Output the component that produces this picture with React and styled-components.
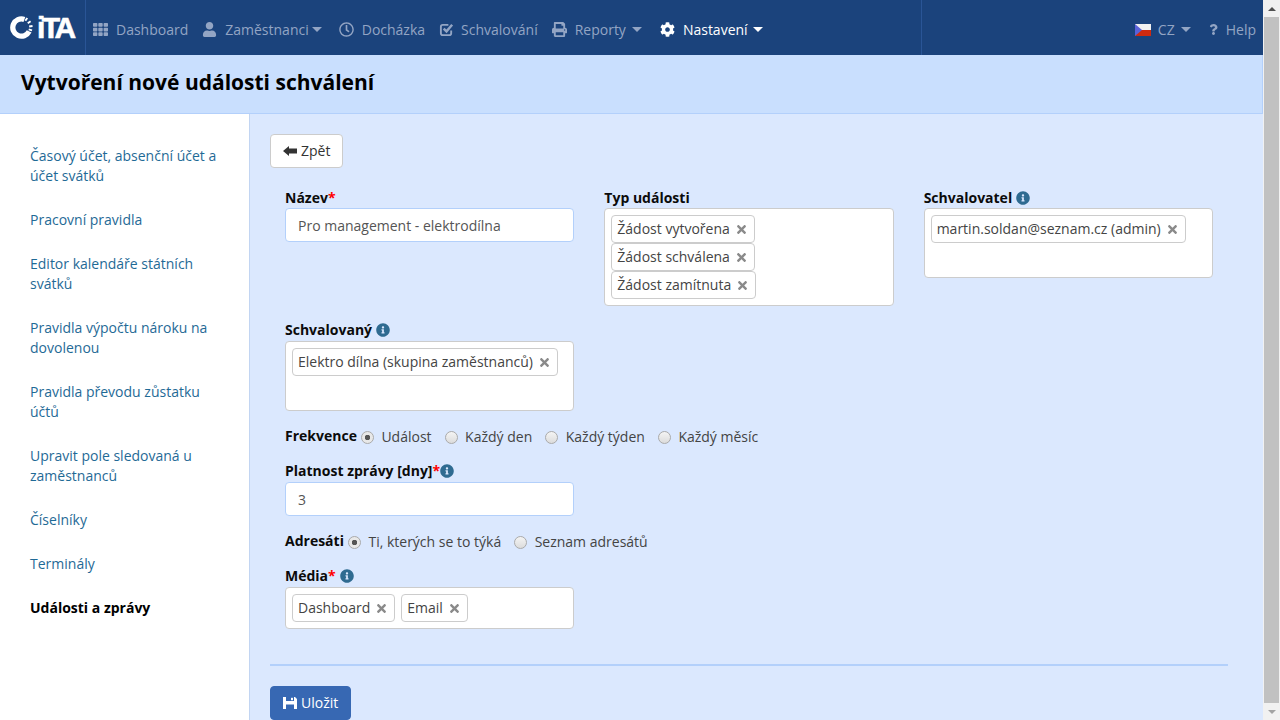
import styled, { createGlobalStyle } from 'styled-components'
import { FaTh, FaUser, FaRegClock, FaPrint, FaCog, FaQuestion, FaInfoCircle, FaTimes } from 'react-icons/fa'

const GlobalStyle = createGlobalStyle`
    html, body {
        margin: 0;
        height: 100%;
        overflow: hidden;
    }
    body {
        font-family: "Open Sans", sans-serif;
        font-size: 14px;
        line-height: 20px;
        color: #333;
    }
    * {
        box-sizing: border-box;
    }
`

const Frame = styled.div`
    display: flex;
    width: 1280px;
    height: 720px;
    overflow: hidden;
`

const Page = styled.div`
    flex: 1;
    min-width: 0;
    display: flex;
    flex-direction: column;
    background: #dbe8fe;
`

const Scrollbar = styled.div`
    width: 17px;
    background: #f1f1f1;
    display: flex;
    flex-direction: column;
    align-items: center;
`

const ScrollArrow = styled.div`
    height: 17px;
    flex: none;
    display: flex;
    align-items: center;
    justify-content: center;

    &::before {
        content: '';
        border-left: 4px solid transparent;
        border-right: 4px solid transparent;
        ${p => p.down ? 'border-top: 4px solid #a3a3a3;' : 'border-bottom: 4px solid #505050;'}
    }
`

const ScrollThumb = styled.div`
    flex: 1;
    width: 15px;
    background: #c1c1c1;
`

const Navbar = styled.nav`
    height: 55px;
    flex: none;
    display: flex;
    align-items: stretch;
    background: #1b437c;
    color: #93a5c4;
`

const Brand = styled.div`
    width: 86px;
    flex: none;
    border-right: 1px solid #2a5596;
    display: flex;
    align-items: center;
    padding-left: 10px;
    gap: 4px;
`

const BrandText = styled.span`
    font-family: "Liberation Sans", sans-serif;
    font-weight: 700;
    font-size: 30px;
    line-height: 24px;
    letter-spacing: -3.5px;
    color: #fff;
    -webkit-text-stroke: 0.6px #fff;
`

const NavLeft = styled.div`
    width: 836px;
    flex: none;
    display: flex;
    align-items: center;
    padding: 4px 0 0 7px;
    border-right: 1px solid #2a5596;
`

const NavRight = styled.div`
    flex: 1;
    display: flex;
    align-items: center;
    justify-content: flex-end;
    padding: 4px 7px 0 0;
`

const NavLink = styled.a`
    display: flex;
    align-items: center;
    margin-left: ${p => p.gap ?? 14}px;
    color: ${p => (p.active ? '#fff' : '#93a5c4')};
    white-space: nowrap;

    svg.icon {
        font-size: 15px;
        margin-right: ${p => p.iconGap || 8}px;
    }
`

const Caret = styled.span`
    display: inline-block;
    margin-left: ${p => p.gap || 6}px;
    border-top: 5px solid currentColor;
    border-left: 5px solid transparent;
    border-right: 5px solid transparent;
`

const Flag = styled.svg`
    width: 16px;
    height: 12px;
    margin-right: 7px;
`

const TitleBar = styled.header`
    height: 59px;
    flex: none;
    display: flex;
    align-items: center;
    padding: 0 0 5px 21px;
    background: #c9dffe;
    border-right: 1px solid #b3d0fb;
    border-bottom: 1px solid #b3d0fb;
`

const Title = styled.h1`
    margin: 0;
    font-size: 21px;
    line-height: 26px;
    font-weight: 700;
    color: #000;
`

const Body = styled.div`
    flex: 1;
    display: flex;
    min-height: 0;
`

const Sidebar = styled.aside`
    width: 250px;
    flex: none;
    background: #fff;
    border-right: 1px solid #c2d5f2;
    padding: 20px 20px 0 30px;
`

const SideItem = styled.a`
    display: block;
    padding: 12px 0;
    color: ${p => (p.active ? '#000' : '#1f6a96')};
    font-weight: ${p => (p.active ? 700 : 400)};
`

const Content = styled.main`
    flex: 1;
    min-width: 0;
    padding: 20px 35px 0 20px;
`

const Button = styled.button`
    display: inline-flex;
    align-items: center;
    gap: 4px;
    height: 34px;
    padding: 0 12px;
    font: inherit;
    color: ${p => (p.primary ? '#fff' : '#333')};
    background: ${p => (p.primary ? '#3768b3' : '#fff')};
    border: 1px solid ${p => (p.primary ? '#3768b3' : '#ccc')};
    border-radius: 4px;
`

const FormGrid = styled.div`
    display: grid;
    grid-template-columns: repeat(3, 1fr);
    margin-top: 20px;
`

const Field = styled.div`
    padding: 0 15px;
`

const Label = styled.label`
    display: flex;
    align-items: center;
    height: 20px;
    margin-top: ${p => p.top || 0}px;
    margin-bottom: ${p => p.bottom || 0}px;
    font-weight: 700;
    color: #0b0b0b;
    white-space: nowrap;
`

const Required = styled.span`
    color: #f00;
`

const Info = styled(FaInfoCircle)`
    color: #2f6b91;
    font-size: 14px;
    margin-left: ${p => p.gap ?? 4}px;
`

const Input = styled.div`
    height: 34px;
    padding: 7px 12px 5px;
    background: #fff;
    border: 1px solid #b3d0fb;
    border-radius: 4px;
    color: #555;
`

const TagBox = styled.div`
    min-height: ${p => p.height}px;
    padding: 6px;
    background: #fff;
    border: 1px solid #ccc;
    border-radius: 4px;
    display: flex;
    flex-wrap: wrap;
    align-content: flex-start;
    flex-direction: ${p => (p.stack ? 'column' : 'row')};
    align-items: flex-start;
    gap: ${p => (p.stack ? 0 : 6)}px;
`

const Tag = styled.span`
    display: inline-flex;
    align-items: center;
    height: 28px;
    padding: 0 6px 0 5px;
    background: #fff;
    border: 1px solid #ccc;
    border-radius: 4px;
    color: #444;
    white-space: nowrap;

    svg {
        margin-left: 5px;
        font-size: 13px;
        color: #8a8a8a;
    }
`

const RadioRow = styled.div`
    display: flex;
    align-items: center;
    height: 20px;
    padding-left: 15px;
    margin-top: 16px;
`

const RowLabel = styled.span`
    font-weight: 700;
    color: #0b0b0b;
    margin-right: 4px;
    margin-top: -2px;
`

const RadioItem = styled.span`
    display: inline-flex;
    align-items: center;
    margin-right: 13px;
    color: #444;
    white-space: nowrap;
`

const RadioDot = styled.span`
    width: 13px;
    height: 13px;
    margin-right: 7.5px;
    border-radius: 50%;
    border: 1px solid #aaa;
    background: ${p => (p.checked
        ? 'radial-gradient(circle, #555 0 2.5px, #e8e8e8 3px)'
        : 'linear-gradient(#f4f4f4, #dcdcdc)')};
`

const NarrowField = styled.div`
    width: 319px;
    padding: 0 15px;
`

const Divider = styled.hr`
    margin: 35px 0 20px;
    height: 2px;
    border: 0;
    background: #b3d0fb;
`

function Radio({ label, checked }) {
    return (
        <RadioItem>
            <RadioDot checked={checked} />
            {label}
        </RadioItem>
    )
}

function Chip({ children }) {
    return (
        <Tag>
            {children}
            <FaTimes />
        </Tag>
    )
}

function CheckIcon() {
    return (
        <svg className="icon" width="15" height="15" viewBox="0 0 16 16" fill="none" stroke="currentColor">
            <path d="M13 9v3a2 2 0 0 1-2 2H4a2 2 0 0 1-2-2V5a2 2 0 0 1 2-2h6" strokeWidth="2" />
            <path d="M5 7l3 3 6-7" strokeWidth="2.6" />
        </svg>
    )
}

function ArrowIcon() {
    return (
        <svg width="14" height="10" viewBox="0 0 14 10" fill="currentColor">
            <path d="M0 5 L6 0 V2.5 H14 V7.5 H6 V10 Z" />
        </svg>
    )
}

function SaveIcon() {
    return (
        <svg width="14" height="12" viewBox="0 0 14 12">
            <path d="M0 0 H12 L14 2 V12 H0 Z" fill="#fff" />
            <rect x="3" y="0" width="8" height="4" fill="#3768b3" />
            <rect x="8" y="0.8" width="2" height="2.4" fill="#fff" />
            <rect x="3" y="7.5" width="8" height="4.5" fill="#3768b3" />
        </svg>
    )
}

const sideItems = [
    'Časový účet, absenční účet a účet svátků',
    'Pracovní pravidla',
    'Editor kalendáře státních svátků',
    'Pravidla výpočtu nároku na dovolenou',
    'Pravidla převodu zůstatku účtů',
    'Upravit pole sledovaná u zaměstnanců',
    'Číselníky',
    'Terminály',
]

export default function App() {
    return (
        <Frame>
            <GlobalStyle />
            <Page>
                <Navbar>
                    <Brand>
                        <svg width="23" height="23" viewBox="0 0 24 24">
                            <path d="M15 3.6 A9 9 0 1 0 20 16" fill="none" stroke="#fff" strokeWidth="5.5" />
                            <path d="M16 5 L18 2 M18.5 7.5 L21.5 5.5 M20 11 L23.5 10.5 M19.5 14 L23 15" stroke="#fff" strokeWidth="2" />
                        </svg>
                        <BrandText>iTA</BrandText>
                    </Brand>
                    <NavLeft>
                        <NavLink gap={0}><FaTh className="icon" />Dashboard</NavLink>
                        <NavLink><FaUser className="icon" />Zaměstnanci<Caret gap={3} /></NavLink>
                        <NavLink gap={17}><FaRegClock className="icon" />Docházka</NavLink>
                        <NavLink iconGap={7}><CheckIcon />Schvalování</NavLink>
                        <NavLink><FaPrint className="icon" />Reporty<Caret /></NavLink>
                        <NavLink active gap={18}><FaCog className="icon" />Nastavení<Caret gap={5} /></NavLink>
                    </NavLeft>
                    <NavRight>
                        <NavLink>
                            <Flag viewBox="0 0 16 12">
                                <rect width="16" height="6" fill="#f1f1f1" />
                                <rect y="6" width="16" height="6" fill="#cf2a10" />
                                <path d="M0 0 L7 6 L0 12 Z" fill="#5a62d8" />
                            </Flag>
                            CZ<Caret />
                        </NavLink>
                        <NavLink gap={17} iconGap={7}><FaQuestion className="icon" style={{ fontSize: 11 }} />Help</NavLink>
                    </NavRight>
                </Navbar>
                <TitleBar>
                    <Title>Vytvoření nové události schválení</Title>
                </TitleBar>
                <Body>
                    <Sidebar>
                        {sideItems.map(item => <SideItem key={item}>{item}</SideItem>)}
                        <SideItem active>Události a zprávy</SideItem>
                    </Sidebar>
                    <Content>
                        <Button><ArrowIcon />Zpět</Button>
                        <FormGrid>
                            <Field>
                                <Label>Název<Required>*</Required></Label>
                                <Input>Pro management - elektrodílna</Input>
                            </Field>
                            <Field>
                                <Label>Typ události</Label>
                                <TagBox stack height={98}>
                                    <Chip>Žádost vytvořena</Chip>
                                    <Chip>Žádost schválena</Chip>
                                    <Chip>Žádost zamítnuta</Chip>
                                </TagBox>
                            </Field>
                            <Field>
                                <Label>Schvalovatel<Info /></Label>
                                <TagBox height={70}>
                                    <Chip>martin.soldan@seznam.cz (admin)</Chip>
                                </TagBox>
                            </Field>
                        </FormGrid>
                        <NarrowField>
                            <Label top={14} bottom={1}>Schvalovaný<Info /></Label>
                            <TagBox height={70}>
                                <Chip>Elektro dílna (skupina zaměstnanců)</Chip>
                            </TagBox>
                        </NarrowField>
                        <RadioRow>
                            <RowLabel>Frekvence</RowLabel>
                            <Radio label="Událost" checked />
                            <Radio label="Každý den" />
                            <Radio label="Každý týden" />
                            <Radio label="Každý měsíc" />
                        </RadioRow>
                        <NarrowField>
                            <Label top={14} bottom={1}>Platnost zprávy [dny]<Required>*</Required><Info gap={0} /></Label>
                            <Input>3</Input>
                        </NarrowField>
                        <RadioRow>
                            <RowLabel>Adresáti</RowLabel>
                            <Radio label="Ti, kterých se to týká" checked />
                            <Radio label="Seznam adresátů" />
                        </RadioRow>
                        <NarrowField>
                            <Label top={14} bottom={1}>Média<Required>*</Required><Info /></Label>
                            <TagBox height={42}>
                                <Chip>Dashboard</Chip>
                                <Chip>Email</Chip>
                            </TagBox>
                        </NarrowField>
                        <Divider />
                        <Button primary><SaveIcon />Uložit</Button>
                    </Content>
                </Body>
            </Page>
            <Scrollbar>
                <ScrollArrow />
                <ScrollThumb />
                <ScrollArrow down />
            </Scrollbar>
        </Frame>
    )
}
